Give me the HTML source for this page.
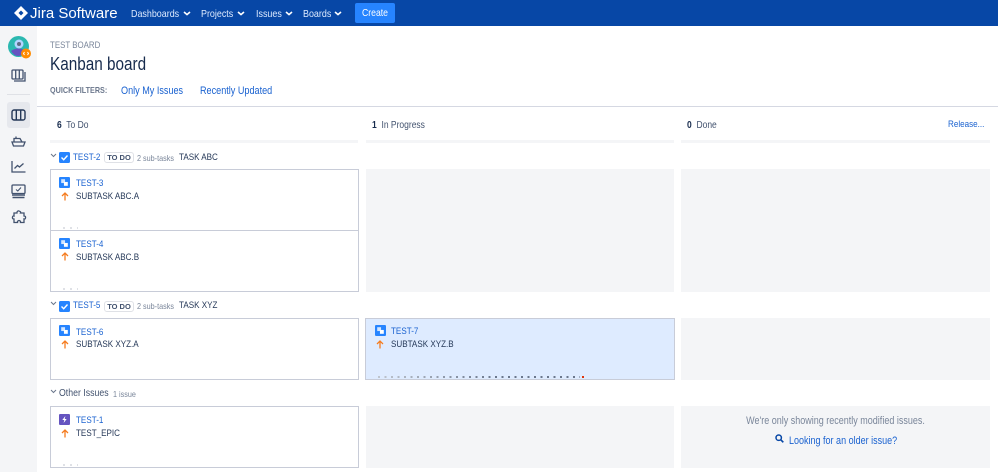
<!DOCTYPE html>
<html><head><meta charset="utf-8"><style>
html,body{margin:0;padding:0}
body{width:998px;height:472px;overflow:hidden;position:relative;background:#fff;font-family:"Liberation Sans",sans-serif;font-size:9.5px;color:#172b4d}
.a{position:absolute;white-space:nowrap}
.t{transform:scaleX(.85);transform-origin:0 50%}
.c{transform-origin:50% 50%}
.l{color:#1a62d0}
.g{color:#7a869a}
.d{color:#253858}
.nav{color:#deebff;font-size:10.5px;top:8px;line-height:12px}
.card{position:absolute;box-sizing:border-box;border:1px solid #c8ccd8;background:#fff}
.gr{position:absolute;background:#f4f5f7}
.badge{position:absolute;box-sizing:border-box;border:1px solid #dfe1e6;border-radius:3px;font-size:7.5px;font-weight:bold;color:#42526e;text-align:center;height:11px;line-height:9px;width:30px;background:#fff}
svg{position:absolute;overflow:visible}
</style></head><body>
<div class="a" style="left:0;top:0;width:998px;height:26px;background:#0747a6"></div>
<svg style="left:14px;top:6px" width="14" height="14" viewBox="0 0 14 14"><path d="M7 0L14 7L7 14L0 7Z" fill="#fff"/><path d="M7 4.500L9.500 7L7 9.500L4.500 7Z" fill="#0747a6"/></svg>
<div class="a" style="left:30px;top:5px;font-size:15px;line-height:17px;color:#fff">Jira Software</div>
<div class="a t nav" style="left:131px">Dashboards</div>
<svg style="left:183px;top:11px" width="8" height="5"><path d="M1 1L4 3.600L7 1" fill="none" stroke="#fff" stroke-width="1.600"/></svg>
<div class="a t nav" style="left:201px">Projects</div>
<svg style="left:237px;top:11px" width="8" height="5"><path d="M1 1L4 3.600L7 1" fill="none" stroke="#fff" stroke-width="1.600"/></svg>
<div class="a t nav" style="left:256px">Issues</div>
<svg style="left:285px;top:11px" width="8" height="5"><path d="M1 1L4 3.600L7 1" fill="none" stroke="#fff" stroke-width="1.600"/></svg>
<div class="a t nav" style="left:303px">Boards</div>
<svg style="left:334px;top:11px" width="8" height="5"><path d="M1 1L4 3.600L7 1" fill="none" stroke="#fff" stroke-width="1.600"/></svg>
<div class="a" style="left:355px;top:3px;width:40px;height:20px;background:#2684ff;border-radius:2px"></div>
<div class="a t c" style="left:355px;top:4px;width:40px;color:#fff;text-align:center;line-height:20px;font-size:10.200px">Create</div>

<div class="a" style="left:0;top:26px;width:37px;height:446px;background:#f4f5f7"></div>
<svg style="left:8px;top:36px" width="24" height="24" viewBox="0 0 24 24"><circle cx="10.500" cy="10.500" r="10.500" fill="#2bb8b0"/><path d="M3 15Q10 10 18 15Q14 20 10 20Q6 20 3 15Z" fill="#6554c0"/><circle cx="11" cy="8" r="4.500" fill="#b3d4ff"/><circle cx="11" cy="8" r="2" fill="#5e6c84"/><circle cx="18" cy="17.500" r="5" fill="#ff8b00"/><path d="M16.500 16L15.500 17.500L16.500 19M19.500 16L20.500 17.500L19.500 19" stroke="#fff" stroke-width="1" fill="none"/></svg>
<svg style="left:11px;top:69px" width="16" height="14" viewBox="0 0 16 14" fill="none" stroke="#42526e" stroke-width="1.300"><rect x="1" y="1" width="11" height="9" rx="1"/><path d="M4.700 1V10M8.300 1V10M14 3V12H3"/></svg>
<div class="a" style="left:7px;top:94px;width:23px;height:1px;background:#dfe1e6"></div>
<div class="a" style="left:7px;top:102px;width:23px;height:26px;background:#e6e8ed;border-radius:3px"></div>
<svg style="left:11px;top:109px" width="15" height="12" viewBox="0 0 15 12" fill="none" stroke="#253858" stroke-width="1.400"><rect x="1" y="1" width="13" height="10" rx="2"/><path d="M5.300 1V11M9.700 1V11"/></svg>
<svg style="left:11px;top:135px" width="15" height="12" viewBox="0 0 15 12" fill="none" stroke="#42526e" stroke-width="1.300"><path d="M1 7H14L12.500 11H2.500ZM3 7V3.500H9L11 7M5 3.500V1.500"/></svg>
<svg style="left:11px;top:160px" width="15" height="13" viewBox="0 0 15 13" fill="none" stroke="#42526e" stroke-width="1.300"><path d="M1 1V12H14.500M3.500 8.500L6.500 5.500L8.500 7L12.500 3.500"/></svg>
<svg style="left:11px;top:184px" width="15" height="15" viewBox="0 0 15 15" fill="none" stroke="#42526e" stroke-width="1.300"><rect x="1" y="1" width="13" height="8.500" rx="1"/><path d="M5 5.500L6.800 7L10 3.500" stroke-width="1.100"/><path d="M1 11H14M1.500 13.500H13.500" stroke-width="1.500"/></svg>
<svg style="left:12px;top:210px" width="14" height="14" viewBox="0 0 14 14" fill="none" stroke="#42526e" stroke-width="1.300"><path d="M5 2Q6 0 8 1.500Q9 2 8.500 3H12V6Q14 6 13.500 8Q13 9.500 12 9V12.500H8.500Q9 11 7 10.500Q5 11 5.500 12.500H2V9Q0 9 .5 7Q1 5.500 2 6V3H5Z"/></svg>

<div class="a t g" style="left:50px;top:40px;font-size:9.300px;line-height:11px">TEST BOARD</div>
<div class="a t" style="left:50px;top:54px;font-size:18px;line-height:20px;color:#172b4d">Kanban board</div>
<div class="a t" style="left:50px;top:85px;font-size:8.500px;line-height:11px;font-weight:bold;color:#6b778c">QUICK FILTERS:</div>
<div class="a t l" style="left:121px;top:85px;font-size:10.700px;line-height:12px">Only My Issues</div>
<div class="a t l" style="left:200px;top:85px;font-size:10.700px;line-height:12px">Recently Updated</div>
<div class="a" style="left:37px;top:106px;width:961px;height:1px;background:#d5d8e2"></div>

<div class="a t" style="left:57px;top:120px;line-height:12px;font-size:10px"><b>6</b>&nbsp; <span style="color:#42526e">To Do</span></div>
<div class="a t" style="left:372px;top:120px;line-height:12px;font-size:10px"><b>1</b>&nbsp; <span style="color:#42526e">In Progress</span></div>
<div class="a t" style="left:687px;top:120px;line-height:12px;font-size:10px"><b>0</b>&nbsp; <span style="color:#42526e">Done</span></div>
<div class="a t l" style="left:948px;top:119px;font-size:9.500px;line-height:12px">Release...</div>
<div class="gr" style="left:50px;top:140px;width:308px;height:3px"></div>
<div class="gr" style="left:366px;top:140px;width:308px;height:3px"></div>
<div class="gr" style="left:681px;top:140px;width:309px;height:3px"></div>

<svg style="left:50px;top:153px" width="7" height="5"><path d="M1 1L3.500 3.500L6 1" fill="none" stroke="#6b778c" stroke-width="1"/></svg>
<svg style="left:59px;top:152px" width="11" height="11" viewBox="0 0 11 11"><rect width="11" height="11" rx="1.500" fill="#2684ff"/><path d="M2.500 5.500L4.700 7.700L8.500 3.500" fill="none" stroke="#fff" stroke-width="1.400"/></svg>
<div class="a t l" style="left:73px;top:152px;line-height:12px">TEST-2</div>
<div class="badge" style="left:104px;top:152px">TO DO</div>
<div class="a t g" style="left:137px;top:152px;font-size:8.500px;line-height:12px">2 sub-tasks</div>
<div class="a t d" style="left:179px;top:152px;line-height:12px">TASK ABC</div>

<div class="card" style="left:50px;top:169px;width:309px;height:62px"></div>
<svg style="left:59px;top:177px" width="11" height="11" viewBox="0 0 10 10"><rect width="10" height="10" rx="1" fill="#2684ff"/><rect x="2" y="2" width="3.500" height="3.500" fill="#fff" opacity=".8"/><rect x="4.500" y="4.500" width="3.500" height="3.500" fill="#fff"/></svg>
<div class="a t l" style="left:76px;top:178px;line-height:12px">TEST-3</div>
<svg style="left:61px;top:192px" width="8" height="9" viewBox="0 0 8 9"><path d="M4 8.500V1M1 4L4 1L7 4" fill="none" stroke="#f57c1f" stroke-width="1.300"/></svg>
<div class="a t d" style="left:76px;top:191px;line-height:12px">SUBTASK ABC.A</div>
<div class="card" style="left:50px;top:230px;width:309px;height:62px"></div>
<svg style="left:59px;top:238px" width="11" height="11" viewBox="0 0 10 10"><rect width="10" height="10" rx="1" fill="#2684ff"/><rect x="2" y="2" width="3.500" height="3.500" fill="#fff" opacity=".8"/><rect x="4.500" y="4.500" width="3.500" height="3.500" fill="#fff"/></svg>
<div class="a t l" style="left:76px;top:239px;line-height:12px">TEST-4</div>
<svg style="left:61px;top:252px" width="8" height="9" viewBox="0 0 8 9"><path d="M4 8.500V1M1 4L4 1L7 4" fill="none" stroke="#f57c1f" stroke-width="1.300"/></svg>
<div class="a t d" style="left:76px;top:252px;line-height:12px">SUBTASK ABC.B</div>
<div class="gr" style="left:366px;top:169px;width:308px;height:123px"></div>
<div class="gr" style="left:681px;top:169px;width:309px;height:123px"></div>

<svg style="left:50px;top:301px" width="7" height="5"><path d="M1 1L3.500 3.500L6 1" fill="none" stroke="#6b778c" stroke-width="1"/></svg>
<svg style="left:59px;top:301px" width="11" height="11" viewBox="0 0 11 11"><rect width="11" height="11" rx="1.500" fill="#2684ff"/><path d="M2.500 5.500L4.700 7.700L8.500 3.500" fill="none" stroke="#fff" stroke-width="1.400"/></svg>
<div class="a t l" style="left:73px;top:300px;line-height:12px">TEST-5</div>
<div class="badge" style="left:104px;top:301px">TO DO</div>
<div class="a t g" style="left:137px;top:300px;font-size:8.500px;line-height:12px">2 sub-tasks</div>
<div class="a t d" style="left:179px;top:300px;line-height:12px">TASK XYZ</div>

<div class="card" style="left:50px;top:318px;width:309px;height:62px"></div>
<svg style="left:59px;top:325px" width="11" height="11" viewBox="0 0 10 10"><rect width="10" height="10" rx="1" fill="#2684ff"/><rect x="2" y="2" width="3.500" height="3.500" fill="#fff" opacity=".8"/><rect x="4.500" y="4.500" width="3.500" height="3.500" fill="#fff"/></svg>
<div class="a t l" style="left:76px;top:327px;line-height:12px">TEST-6</div>
<svg style="left:61px;top:340px" width="8" height="9" viewBox="0 0 8 9"><path d="M4 8.500V1M1 4L4 1L7 4" fill="none" stroke="#f57c1f" stroke-width="1.300"/></svg>
<div class="a t d" style="left:76px;top:339px;line-height:12px">SUBTASK XYZ.A</div>
<div class="card" style="left:365px;top:318px;width:310px;height:62px;background:#deebff"></div>
<svg style="left:375px;top:325px" width="11" height="11" viewBox="0 0 10 10"><rect width="10" height="10" rx="1" fill="#2684ff"/><rect x="2" y="2" width="3.500" height="3.500" fill="#fff" opacity=".8"/><rect x="4.500" y="4.500" width="3.500" height="3.500" fill="#fff"/></svg>
<div class="a t l" style="left:391px;top:326px;line-height:12px">TEST-7</div>
<svg style="left:376px;top:340px" width="8" height="9" viewBox="0 0 8 9"><path d="M4 8.500V1M1 4L4 1L7 4" fill="none" stroke="#f57c1f" stroke-width="1.300"/></svg>
<div class="a t d" style="left:391px;top:339px;line-height:12px">SUBTASK XYZ.B</div>
<svg style="left:376px;top:375px" width="212" height="4"><defs><linearGradient id="f" gradientUnits="userSpaceOnUse" x1="0" y1="0" x2="120" y2="0"><stop offset="0" stop-color="#c1c7d0"/><stop offset="1" stop-color="#6b778c"/></linearGradient></defs><path d="M2 2H204" stroke="url(#f)" stroke-width="2" stroke-dasharray="2 4.500"/><rect x="206" y="1" width="2" height="2" fill="#de350b"/></svg>
<div class="gr" style="left:681px;top:318px;width:309px;height:62px"></div>

<svg style="left:50px;top:389px" width="7" height="5"><path d="M1 1L3.500 3.500L6 1" fill="none" stroke="#6b778c" stroke-width="1"/></svg>
<div class="a t" style="left:59px;top:388px;line-height:12px;font-size:10.300px;color:#42526e">Other Issues</div>
<div class="a t g" style="left:113px;top:388px;font-size:8.500px;line-height:12px">1 issue</div>

<div class="card" style="left:50px;top:406px;width:309px;height:62px"></div>
<svg style="left:59px;top:414px" width="11" height="11" viewBox="0 0 10 10"><rect width="10" height="10" rx="1" fill="#6554c0"/><path d="M5.800 1.800L3 5.500H4.800L4.200 8.200L7 4.500H5.200Z" fill="#fff"/></svg>
<div class="a t l" style="left:76px;top:415px;line-height:12px">TEST-1</div>
<svg style="left:61px;top:429px" width="8" height="9" viewBox="0 0 8 9"><path d="M4 8.500V1M1 4L4 1L7 4" fill="none" stroke="#f57c1f" stroke-width="1.300"/></svg>
<div class="a t d" style="left:76px;top:428px;line-height:12px">TEST_EPIC</div>
<div class="gr" style="left:366px;top:406px;width:308px;height:62px"></div>
<div class="gr" style="left:681px;top:406px;width:309px;height:62px"></div>
<div class="a t c g" style="left:681px;top:415px;width:309px;text-align:center;line-height:12px;font-size:10.600px">We're only showing recently modified issues.</div>
<svg style="left:775px;top:434px" width="9" height="10" viewBox="0 0 9 10"><circle cx="3.700" cy="3.700" r="2.700" fill="none" stroke="#0747a6" stroke-width="1.500"/><path d="M5.700 5.700L8.300 8.300" stroke="#0747a6" stroke-width="1.700"/></svg>
<div class="a t l" style="left:789px;top:435px;line-height:12px;font-size:10.600px">Looking for an older issue?</div>

<svg style="left:62px;top:227px" width="18" height="2"><path d="M1 1H16" stroke="#dfe1e6" stroke-width="2" stroke-dasharray="2 5"/></svg>
<svg style="left:62px;top:288px" width="18" height="2"><path d="M1 1H16" stroke="#dfe1e6" stroke-width="2" stroke-dasharray="2 5"/></svg>
<svg style="left:62px;top:464px" width="18" height="2"><path d="M1 1H16" stroke="#dfe1e6" stroke-width="2" stroke-dasharray="2 5"/></svg>
</body></html>
